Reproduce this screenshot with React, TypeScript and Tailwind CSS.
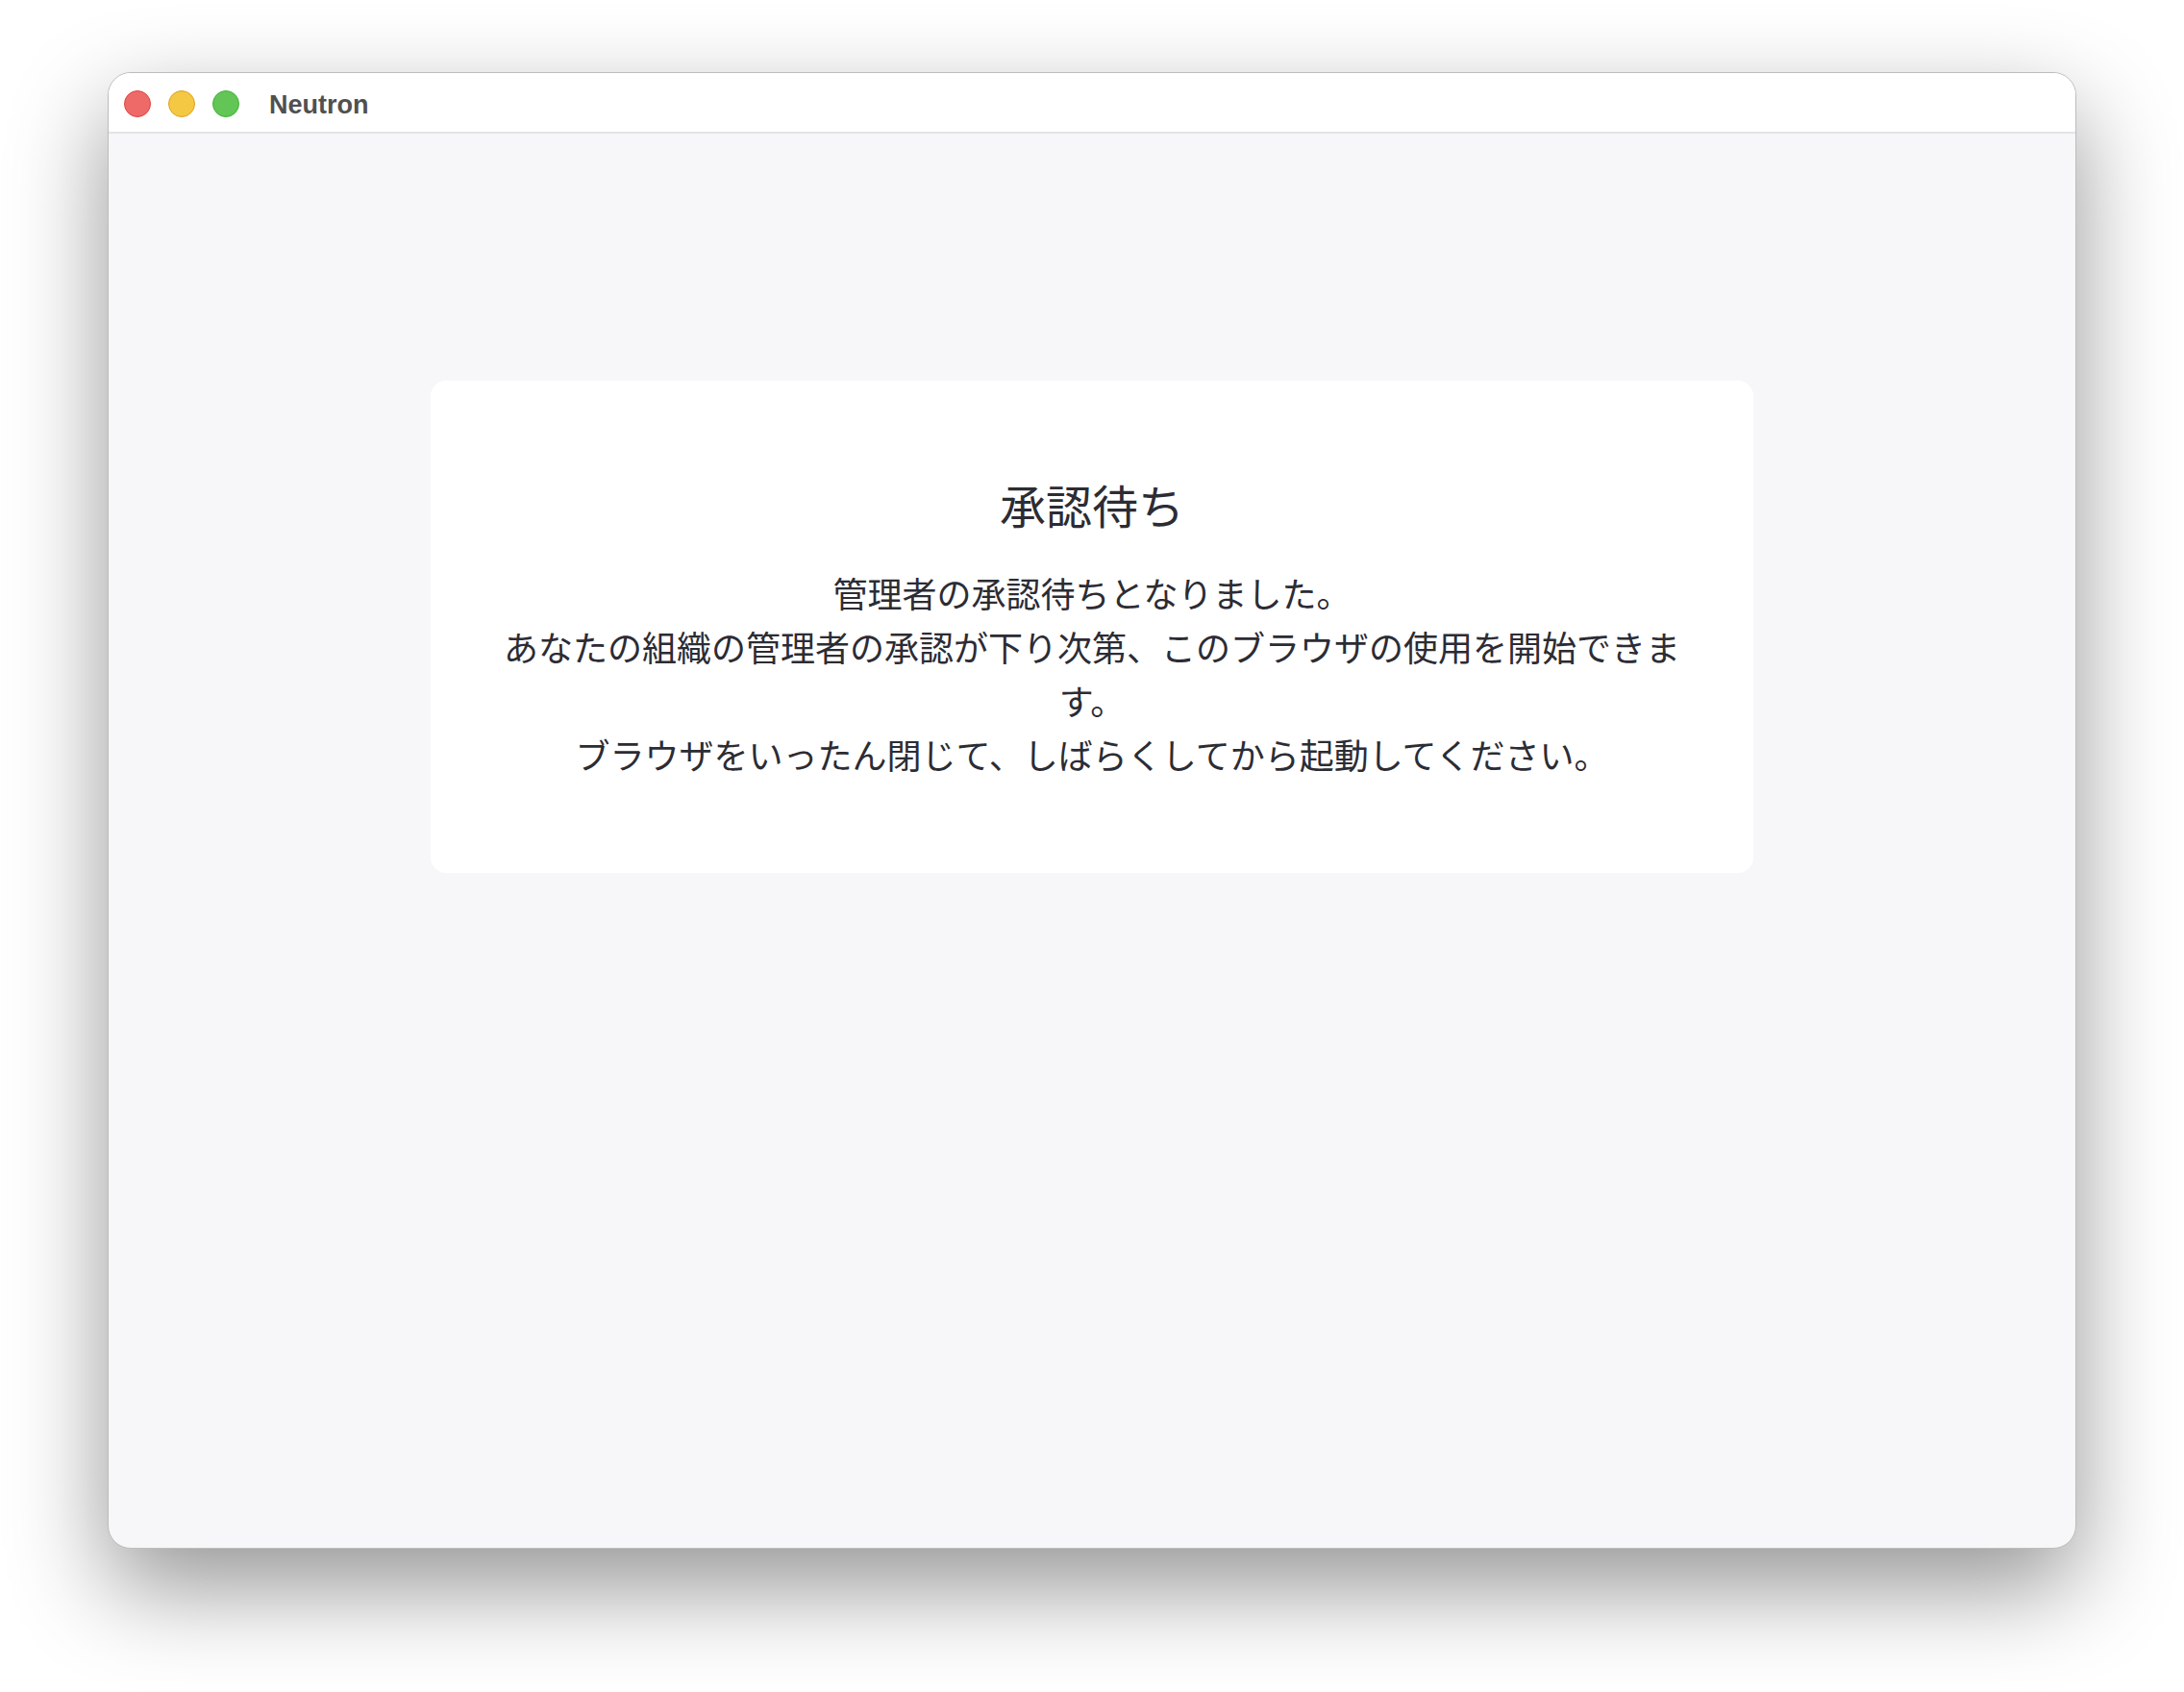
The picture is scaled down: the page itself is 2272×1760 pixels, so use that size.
import React from 'react';

const cjk = { fontFamily: '"Noto Sans CJK JP", "Noto Sans", sans-serif' };

function TrafficLights() {
  return (
    <div className="flex items-center gap-[18px]">
      <span className="h-[28px] w-[28px] rounded-full border border-[#e0443e] bg-[#ee6a68]" />
      <span className="h-[28px] w-[28px] rounded-full border border-[#dea123] bg-[#f4c843]" />
      <span className="h-[28px] w-[28px] rounded-full border border-[#3fb33a] bg-[#62c555]" />
    </div>
  );
}

export default function App() {
  return (
    <div className="h-[1760px] w-[2272px] overflow-hidden bg-white pl-[112px] pt-[75px]">
      {/* Window */}
      <div className="flex h-[1536px] w-[2048px] flex-col overflow-hidden rounded-[24px] border border-[#bdbdbd] bg-[#f7f7f9] shadow-[0_40px_100px_rgba(0,0,0,0.42)]">
        {/* Title bar */}
        <div className="flex h-[63px] shrink-0 items-center border-b-2 border-[#e4e4e6] bg-white pl-[16px] pt-[3px]">
          <TrafficLights />
          <span
            className="ml-[31px] mt-[3px] text-[27px] font-bold leading-none text-[#505050]"
            style={{ fontFamily: '"Liberation Sans", Arial, sans-serif' }}
          >
            Neutron
          </span>
        </div>

        {/* Content */}
        <div className="flex flex-1 justify-center pt-[257px]" style={cjk}>
          <div className="h-fit w-[1376px] rounded-[16px] bg-white px-[64px] py-[96px] text-center text-[#2c2c34]">
            <h1 className="mb-[32px] text-[48px] font-normal leading-[64px]">承認待ち</h1>
            <p className="text-[36px] leading-[56px]">
              管理者の承認待ちとなりました。
              <br />
              あなたの組織の管理者の承認が下り次第、このブラウザの使用を開始できます。
              <br />
              ブラウザをいったん閉じて、しばらくしてから起動してください。
            </p>
          </div>
        </div>
      </div>
    </div>
  );
}
